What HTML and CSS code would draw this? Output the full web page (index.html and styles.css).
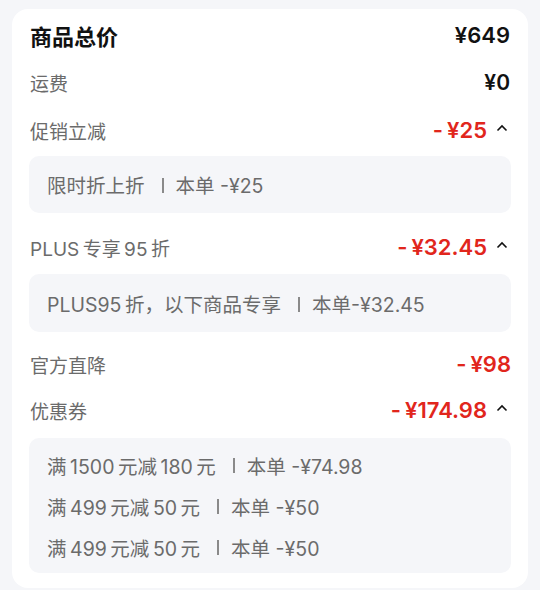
FILE: index.html
```html
<!DOCTYPE html>
<html lang="zh-CN">
<head>
    <meta charset="UTF-8">
    <meta name="viewport" content="width=device-width, initial-scale=1.0">
    <title>价格明细</title>
    <link rel="stylesheet" href="styles.css">
</head>
<body>
    <div class="card">
        <div class="row row-total">
            <span class="label">商品总价</span>
            <span class="amount">¥649</span>
        </div>
        <div class="row row-freight">
            <span class="label">运费</span>
            <span class="amount amount-small">¥0</span>
        </div>

        <div class="row row-promo">
            <span class="label">促销立减</span>
            <span class="amount red"><span class="minus">-</span>¥25<svg class="caret" viewBox="0 0 12 8"><path d="M1.5 6.5 L6 2 L10.5 6.5"/></svg></span>
        </div>
        <div class="detail detail-promo">
            <div class="line">限时折上折<span class="sep"></span>本单 -¥25</div>
        </div>

        <div class="row row-plus">
            <span class="label">PLUS&thinsp;专享&thinsp;95&thinsp;折</span>
            <span class="amount red"><span class="minus">-</span>¥32.45<svg class="caret" viewBox="0 0 12 8"><path d="M1.5 6.5 L6 2 L10.5 6.5"/></svg></span>
        </div>
        <div class="detail detail-plus">
            <div class="line">PLUS95&thinsp;折，以下商品专享<span class="sep"></span>本单-¥32.45</div>
        </div>

        <div class="row row-official">
            <span class="label">官方直降</span>
            <span class="amount red"><span class="minus">-</span>¥98</span>
        </div>
        <div class="row row-coupon">
            <span class="label">优惠券</span>
            <span class="amount red"><span class="minus">-</span>¥174.98<svg class="caret" viewBox="0 0 12 8"><path d="M1.5 6.5 L6 2 L10.5 6.5"/></svg></span>
        </div>
        <div class="detail detail-coupon">
            <div class="line">满&thinsp;1500&thinsp;元减&thinsp;180&thinsp;元<span class="sep"></span>本单 -¥74.98</div>
            <div class="line">满&thinsp;499&thinsp;元减&thinsp;50&thinsp;元<span class="sep"></span>本单 -¥50</div>
            <div class="line">满&thinsp;499&thinsp;元减&thinsp;50&thinsp;元<span class="sep"></span>本单 -¥50</div>
        </div>
    </div>
</body>
</html>
```

FILE: styles.css
```css
body {
    margin: 0;
    padding: 9px 12px 0;
    background-color: #f5f6f9;
    font-family: Inter, "Noto Sans CJK SC", sans-serif;
    color: #1a1a1a;
}
.card {
    background-color: #fff;
    border-radius: 16px;
    padding: 3px 17px 15px;
}
.row {
    height: 46px;
    display: flex;
    align-items: center;
    justify-content: space-between;
    padding-left: 1px;
}
.label {
    font-size: 19px;
    color: #6b6b6b;
}
.row-total .label {
    font-size: 22px;
    font-weight: bold;
    color: #111;
}
.amount {
    display: flex;
    align-items: center;
    font-size: 22px;
    font-weight: 600;
    color: #111;
    padding-right: 1px;
}
.amount-small {
    font-size: 21px;
}
.red {
    color: #e1261c;
    padding-right: 0;
}
.minus {
    margin-right: 4px;
}
.caret {
    width: 12px;
    height: 8px;
    margin-left: 9px;
    margin-right: 3px;
    margin-bottom: 4px;
    fill: none;
    stroke: #111;
    stroke-width: 1.6;
}
.row-freight {
    margin-top: 1px;
}
.row-promo {
    margin-top: 2px;
}
.row-plus {
    margin-top: 11px;
}
.row-official {
    margin-top: 9px;
}
.detail {
    background-color: #f5f6f9;
    border-radius: 10px;
    padding: 0 18px;
    color: #6b6b6b;
    font-size: 19.5px;
}
.detail-promo {
    margin-top: 3px;
    height: 57px;
    display: flex;
    align-items: center;
}
.detail-plus {
    margin-top: 4px;
    height: 58px;
    display: flex;
    align-items: center;
}
.detail-coupon {
    margin-top: 5px;
    padding-top: 7px;
    padding-bottom: 5px;
}
.detail-coupon .line {
    height: 41px;
    display: flex;
    align-items: center;
}
.sep {
    display: inline-block;
    width: 2px;
    height: 15px;
    background-color: #8a8a8a;
    margin: 0 12px 0 17px;
}
```
